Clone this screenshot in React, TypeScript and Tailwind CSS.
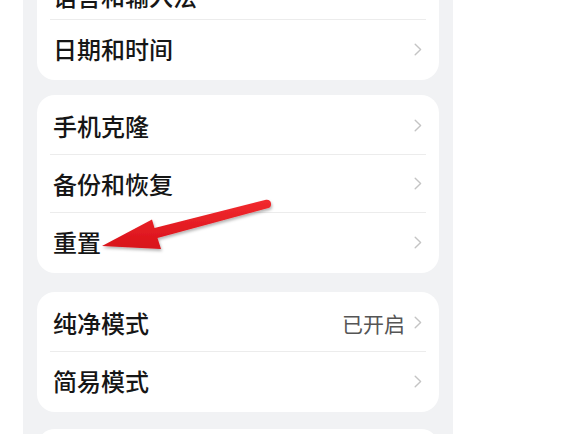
import React from "react";

const Chevron = () => (
  <svg width="8" height="13" viewBox="0 0 8 13" className="shrink-0">
    <path d="M1.2 1.2 L6.6 6.5 L1.2 11.8" fill="none" stroke="#c4c4c4" strokeWidth="1.4" strokeLinecap="round" strokeLinejoin="round" />
  </svg>
);

type RowProps = { label: string; value?: string; last?: boolean; cut?: boolean };

const Row = ({ label, value, last, cut }: RowProps) => (
  <div
    className={`h-[58px] flex justify-between pl-[3px] pr-[4px] ${cut ? "items-end pb-[8px]" : "items-center"} ${last ? "" : "border-b border-[#ececec]"}`}
  >
    <span className="text-[24px] leading-[30px] font-medium text-[#161616]">{label}</span>
    {!cut && (
      <div className="flex items-center gap-[9px]">
        {value && <span className="text-[21px] leading-[26px] text-[#555555]">{value}</span>}
        <Chevron />
      </div>
    )}
  </div>
);

const Card = ({ children, className = "" }: { children: React.ReactNode; className?: string }) => (
  <div className={`bg-white rounded-[18px] px-[13px] py-[2px] ${className}`}>{children}</div>
);

export default function App() {
  return (
    <div
      className="relative w-[574px] h-[434px] bg-white overflow-hidden"
      style={{ fontFamily: "'Noto Sans CJK SC', 'Noto Sans', sans-serif" }}
    >
      <div className="ml-[23px] w-[430px] h-[434px] bg-[#f1f2f4] px-[14px] flex flex-col overflow-hidden">
        <div className="-mt-[40px] flex flex-col">
          <Card>
            <Row label="语言和输入法" cut />
            <Row label="日期和时间" last />
          </Card>
          <Card className="mt-[15px]">
            <Row label="手机克隆" />
            <Row label="备份和恢复" />
            <Row label="重置" last />
          </Card>
          <Card className="mt-[19px]">
            <Row label="纯净模式" value="已开启" />
            <Row label="简易模式" last />
          </Card>
          <Card className="mt-[17px] h-[80px] shrink-0">
            <div />
          </Card>
        </div>
      </div>
      <svg
        className="absolute left-0 top-0 pointer-events-none"
        width="574"
        height="434"
        viewBox="0 0 574 434"
      >
        <defs>
          <filter id="sh" x="-20%" y="-50%" width="140%" height="200%">
            <feDropShadow dx="1" dy="2" stdDeviation="1.5" floodColor="#000" floodOpacity="0.3" />
          </filter>
          <linearGradient id="ag" x1="0" y1="0" x2="0" y2="1">
            <stop offset="0" stopColor="#f22a2e" />
            <stop offset="1" stopColor="#d8121a" />
          </linearGradient>
        </defs>
        <path
          d="M102 246 L152 219.5 L154.5 228 L266 199.8 Q270.5 199.3 271 203.5 Q271.3 207.5 268.5 208 L157.5 238 L161 249 Z"
          fill="url(#ag)"
          filter="url(#sh)"
        />
      </svg>
    </div>
  );
}
